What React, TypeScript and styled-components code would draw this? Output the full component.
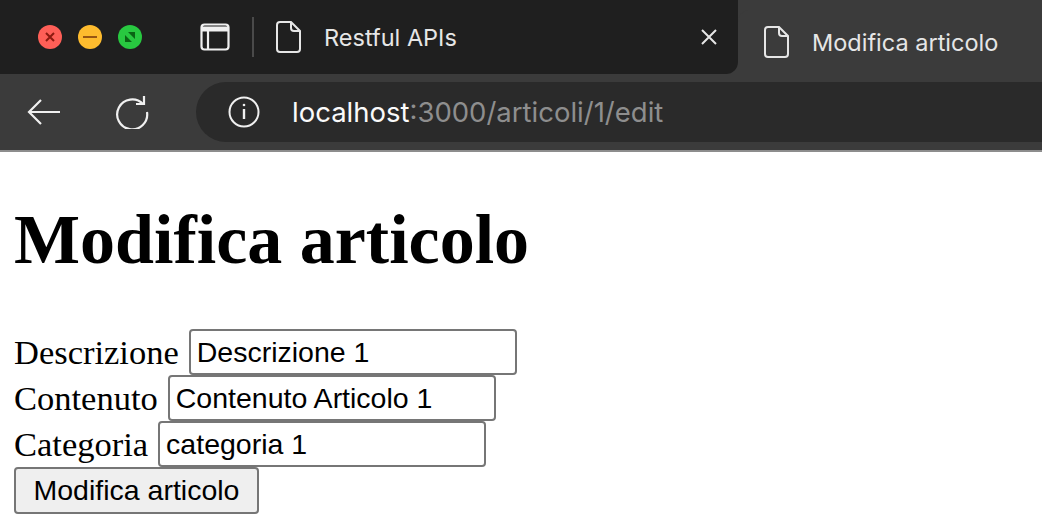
import React from "react";
import styled, { createGlobalStyle } from "styled-components";

const Global = createGlobalStyle`
  html, body { margin: 0; padding: 0; background: #fff; }
  body { width: 1042px; height: 530px; overflow: hidden; }
`;

const Chrome = styled.div`
  background: #3b3b3b;
  font-family: Inter, "Noto Sans", sans-serif;
  color: #f0f0f0;
`;
const TabStrip = styled.div`
  height: 74px;
  display: flex;
  background: #3b3b3b;
`;
const InactiveArea = styled.div`
  width: 738px;
  background: #1f1f1f;
  border-bottom-right-radius: 12px;
  display: flex;
  align-items: center;
`;
const Lights = styled.div`
  display: flex;
  gap: 16px;
  padding-left: 38px;
  width: 162px;
`;
const Light = styled.div<{ $c: string }>`
  width: 24px;
  height: 24px;
  border-radius: 50%;
  background: ${(p) => p.$c};
  display: flex;
  align-items: center;
  justify-content: center;
`;
const Sep = styled.div`
  width: 2px;
  height: 40px;
  background: #4a4a4a;
  margin: 0 22px;
`;
const TabTitle = styled.span`
  font-size: 23.5px;
  color: #e6e6e6;
  margin-left: 22px;
  flex: 1;
`;
const ActiveTab = styled.div`
  flex: 1;
  margin-top: 10px;
  background: #3b3b3b;
  border-top-left-radius: 12px;
  display: flex;
  align-items: center;
  padding-left: 26px;
`;
const Toolbar = styled.div`
  height: 76px;
  display: flex;
  align-items: center;
  border-bottom: 2px solid #8d8d8d;
`;
const NavBtn = styled.div`
  width: 88px;
  display: flex;
  justify-content: center;
`;
const UrlPill = styled.div`
  margin-left: 20px;
  flex: 1;
  height: 60px;
  background: #2a2a2a;
  border-radius: 30px 0 0 30px;
  display: flex;
  align-items: center;
  padding-left: 32px;
  font-size: 27.5px;
`;
const Host = styled.span`color: #fafafa; margin-left: 32px;`;
const Path = styled.span`color: #8e8e8e;`;

const Page = styled.div`
  padding: 0 14px;
  font-family: "Liberation Serif", "Times New Roman", serif;
  color: #000;
`;
const Title = styled.h1`
  font-size: 70px;
  font-weight: bold;
  margin: 48px 0 49px;
  line-height: 80px;
`;
const Row = styled.div`
  height: 46px;
  display: flex;
  align-items: center;
  gap: 10px;
  font-size: 34.5px;
`;
const Input = styled.input`
  box-sizing: border-box;
  width: 328px;
  height: 46px;
  border: 2px solid #767676;
  border-radius: 4px;
  padding: 0 6px;
  font-family: "Liberation Sans", Arial, sans-serif;
  font-size: 28.5px;
  color: #000;
  outline: none;
`;
const Button = styled.button`
  box-sizing: border-box;
  height: 47px;
  width: 245px;
  background: #efefef;
  border: 2px solid #767676;
  border-radius: 4px;
  font-family: "Liberation Sans", Arial, sans-serif;
  font-size: 28.5px;
  color: #000;
  padding: 0 16px;
  white-space: nowrap;
`;

const Doc = () => (
  <svg width="26" height="32" viewBox="0 0 26 32" fill="none" stroke="#e6e6e6" strokeWidth="2">
    <path d="M4 1h11l9 9v18a3 3 0 0 1-3 3H4a3 3 0 0 1-3-3V4a3 3 0 0 1 3-3z" />
    <path d="M15 1v6a3 3 0 0 0 3 3h6" />
  </svg>
);

export default function App() {
  return (
    <>
      <Global />
      <Chrome>
        <TabStrip>
          <InactiveArea>
            <Lights>
              <Light $c="#fe5f57">
                <svg width="12" height="12" viewBox="0 0 12 12" stroke="#8c1a10" strokeWidth="2"><path d="M2 2l8 8M10 2l-8 8" /></svg>
              </Light>
              <Light $c="#febc2e">
                <svg width="16" height="4" viewBox="0 0 16 4"><rect x="1" y="1" width="14" height="2" fill="#985712" /></svg>
              </Light>
              <Light $c="#28c840">
                <svg width="14" height="14" viewBox="0 0 14 14"><path d="M2 5v7h7zM12 9V2H5z" fill="#0a6414" /></svg>
              </Light>
            </Lights>
            <svg width="30" height="28" viewBox="0 0 30 28" fill="none" stroke="#f0f0f0" strokeWidth="2.2">
              <rect x="1.5" y="1.5" width="27" height="25" rx="3" />
              <path d="M1.5 6h27" strokeWidth="5" />
              <path d="M8 8v18" />
            </svg>
            <Sep />
            <Doc />
            <TabTitle>Restful APIs</TabTitle>
            <svg width="18" height="18" viewBox="0 0 18 18" stroke="#e6e6e6" strokeWidth="2" style={{ marginRight: 20 }}>
              <path d="M2 2l14 14M16 2L2 16" />
            </svg>
          </InactiveArea>
          <ActiveTab>
            <Doc />
            <TabTitle>Modifica articolo</TabTitle>
          </ActiveTab>
        </TabStrip>
        <Toolbar>
          <NavBtn>
            <svg width="34" height="28" viewBox="0 0 34 28" fill="none" stroke="#f0f0f0" strokeWidth="2.2">
              <path d="M33 14H2M14 2L2 14l12 12" />
            </svg>
          </NavBtn>
          <NavBtn>
            <svg width="34" height="34" viewBox="0 0 34 34" fill="none" stroke="#f0f0f0" strokeWidth="2.2">
              <path d="M28 9A15 15 0 1 0 32 17" />
              <path d="M29 1v8h-8" />
            </svg>
          </NavBtn>
          <UrlPill>
            <svg width="32" height="32" viewBox="0 0 32 32" fill="none" stroke="#f0f0f0" strokeWidth="2">
              <circle cx="16" cy="16" r="14.5" />
              <path d="M16 13v10" strokeWidth="2.4" />
              <circle cx="16" cy="9" r="1.3" fill="#f0f0f0" stroke="none" />
            </svg>
            <Host>localhost</Host>
            <Path>:3000/articoli/1/edit</Path>
          </UrlPill>
        </Toolbar>
      </Chrome>
      <Page>
        <Title>Modifica articolo</Title>
        <form>
          <Row>Descrizione <Input defaultValue="Descrizione 1" /></Row>
          <Row>Contenuto <Input defaultValue="Contenuto Articolo 1" /></Row>
          <Row>Categoria <Input defaultValue="categoria 1" /></Row>
          <Row><Button type="button">Modifica articolo</Button></Row>
        </form>
      </Page>
    </>
  );
}
